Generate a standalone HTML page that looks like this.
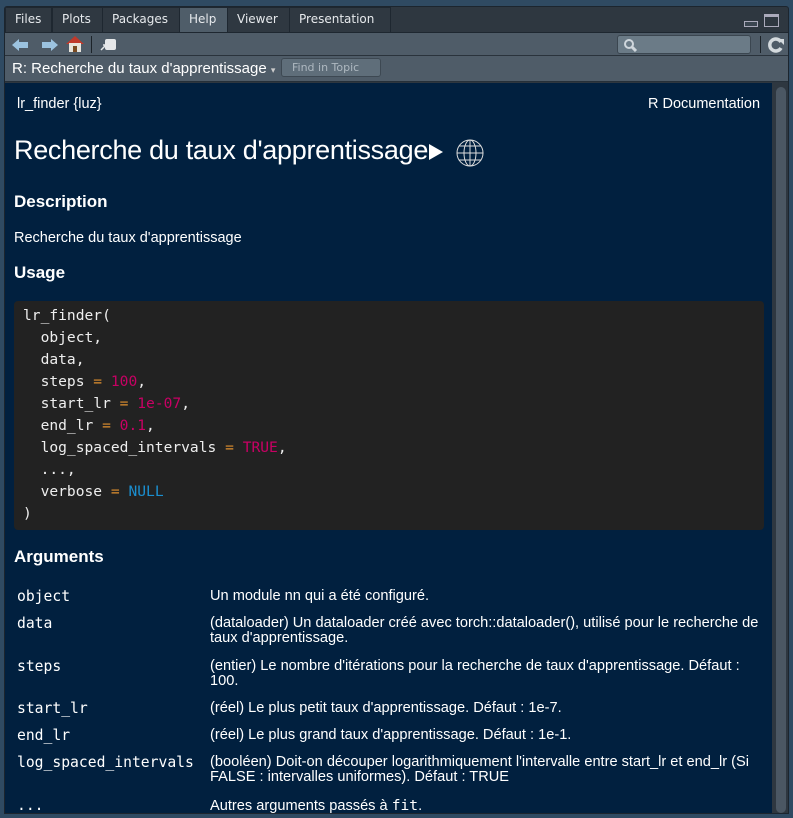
<!DOCTYPE html>
<html><head><meta charset="utf-8"><style>
*{box-sizing:border-box;margin:0;padding:0}
body{width:793px;height:818px;background:#2f4a62;font-family:"Liberation Sans",sans-serif;position:relative;overflow:hidden}
#panel{position:absolute;left:4px;top:6px;width:785px;height:808px;background:#2e3740;border:1px solid #1c252e;border-radius:3px 3px 0 0;overflow:hidden}
.tabs{position:absolute;left:0;top:0;height:25px;width:100%}
.tab{position:absolute;top:0;height:25px;border:1px solid #1e2730;border-bottom:none;background:#2f3841;color:#e6e9ec;font-family:"DejaVu Sans",sans-serif;font-size:12px;line-height:23px;padding-left:9px}
.tab.sel{background:#4f5d69}
#tb{position:absolute;left:0;top:25px;height:24px;width:100%;background:#4f5c68;border-top:1px solid #1e2730;border-bottom:1px solid #2a333c}
#tt{position:absolute;left:0;top:49px;height:26px;width:100%;background:#4f5c68;border-bottom:1px solid #263039}
#content{position:absolute;left:0;top:76px;width:767px;height:732px;background:#01203f;color:#fff}
#sb{position:absolute;left:767px;top:76px;width:18px;height:732px;background:#2e3740}
#sb div{position:absolute;left:4px;top:4px;width:10px;height:726px;border-radius:5px;background:#4b5763}
.abs{position:absolute;white-space:nowrap}
.mono{font-family:"DejaVu Sans Mono",monospace}
h2{position:absolute;font-size:17px;font-weight:bold;left:9px}
.code{position:absolute;left:9px;top:218px;width:750px;height:229px;background:#222;border-radius:4px}
.code pre{position:absolute;left:9px;top:4px;font-family:"DejaVu Sans Mono",monospace;font-size:14.6px;line-height:22px;color:#eee}
.o{color:#e0902f}.n{color:#c80064}.b{color:#1b8fd0}
.arg{position:absolute;left:12px;font-family:"DejaVu Sans Mono",monospace;font-size:14.7px;color:#fff}
.d{position:absolute;left:205px;font-size:14.6px;line-height:15px;color:#fff;white-space:nowrap}
</style></head><body>
<div id="panel">
 <div class="tabs">
  <div class="tab" style="left:0;width:47px">Files</div>
  <div class="tab" style="left:47px;width:51px">Plots</div>
  <div class="tab" style="left:97px;width:78px">Packages</div>
  <div class="tab sel" style="left:174px;width:49px">Help</div>
  <div class="tab" style="left:222px;width:63px">Viewer</div>
  <div class="tab" style="left:284px;width:102px">Presentation</div>
  <div class="abs" style="left:739px;top:14px;width:14px;height:6px;border:1px solid #aab;background:#3a4550"></div>
  <div class="abs" style="left:759px;top:7px;width:15px;height:13px;border:1px solid #aab;border-top-width:3px"></div>
 </div>
 <div id="tb">
  <svg class="abs" style="left:6px;top:4px" width="20" height="16"><path d="M1 8 L8 2 V5 H17 V11 H8 V14 Z" fill="#9cc3e0"/></svg>
  <svg class="abs" style="left:34px;top:4px" width="20" height="16"><path d="M19 8 L12 2 V5 H3 V11 H12 V14 Z" fill="#9cc3e0"/></svg>
  <svg class="abs" style="left:60px;top:2px" width="20" height="18"><path d="M1 9 L10 1 L19 9 Z" fill="#c0392b"/><rect x="4" y="8" width="12" height="9" fill="#e8e4dc"/><rect x="8" y="11" width="4" height="6" fill="#7a4b22"/></svg>
  <div class="abs" style="left:86px;top:3px;width:1px;height:17px;background:#1c2329"></div>
  <svg class="abs" style="left:95px;top:5px" width="18" height="14"><rect x="5" y="1" width="11" height="11" rx="2" fill="#e6e8ea"/><path d="M1 12 L6 7 M3 7 H6 V10" stroke="#e6e8ea" stroke-width="1.5" fill="none"/></svg>
  <div class="abs" style="left:612px;top:2px;width:134px;height:19px;background:#6b7b87;border:1px solid #3b4650;border-radius:3px"></div>
  <svg class="abs" style="left:618px;top:5px" width="16" height="14"><circle cx="6" cy="6" r="4" stroke="#cfd6dc" stroke-width="2" fill="none"/><path d="M9 9 L13 13" stroke="#cfd6dc" stroke-width="3"/></svg>
  <div class="abs" style="left:755px;top:3px;width:1px;height:17px;background:#1c2329"></div>
  <svg class="abs" style="left:762px;top:3px" width="18" height="18"><path d="M14 6 A6 6 0 1 0 14 12" stroke="#d4dade" stroke-width="3.5" fill="none"/><path d="M11 3 H17 V9 Z" fill="#d4dade"/></svg>
 </div>
 <div id="tt">
  <div class="abs" style="left:7px;top:4px;font-size:15px;color:#fff">R: Recherche du taux d'apprentissage <span style="font-size:9px;color:#ccc">▾</span></div>
  <div class="abs" style="left:276px;top:2px;width:100px;height:19px;background:#5f6e7a;border:1px solid #3d4852;border-radius:3px;font-family:'DejaVu Sans',sans-serif;font-size:11px;color:#aeb8c0;line-height:17px;padding-left:10px">Find in Topic</div>
 </div>
 <div id="content">
  <div class="abs" style="left:12px;top:13px;font-size:14.5px">lr_finder {luz}</div>
  <div class="abs" style="left:643px;top:13px;font-size:14.5px">R Documentation</div>
  <div class="abs" style="left:9px;top:52px;font-size:27px;letter-spacing:-0.3px">Recherche du taux d'apprentissage</div>
  <svg class="abs" style="left:423px;top:60px" width="16" height="18"><path d="M1 1 L15 9 L1 17 Z" fill="#fff"/></svg>
  <svg class="abs" style="left:451px;top:56px" width="28" height="28" fill="none" stroke="#ddd" stroke-width="1"><circle cx="14" cy="14" r="13"/><ellipse cx="14" cy="14" rx="6" ry="13"/><path d="M14 1 V27 M1 14 H27 M3 7 H25 M3 21 H25"/></svg>
  <h2 style="top:109px">Description</h2>
  <div class="abs" style="left:9px;top:147px;font-size:14.5px">Recherche du taux d'apprentissage</div>
  <h2 style="top:180px">Usage</h2>
  <div class="code"><pre>lr_finder(
  object,
  data,
  steps <span class="o">=</span> <span class="n">100</span>,
  start_lr <span class="o">=</span> <span class="n">1e-07</span>,
  end_lr <span class="o">=</span> <span class="n">0.1</span>,
  log_spaced_intervals <span class="o">=</span> <span class="n">TRUE</span>,
  ...,
  verbose <span class="o">=</span> <span class="b">NULL</span>
)</pre></div>
  <h2 style="top:464px">Arguments</h2>
  <div class="arg" style="top:505px">object</div><div class="d" style="top:506px">Un module nn qui a été configuré.</div>
  <div class="arg" style="top:532px">data</div><div class="d" style="top:533px">(dataloader) Un dataloader créé avec torch::dataloader(), utilisé pour le recherche de<br>taux d'apprentissage.</div>
  <div class="arg" style="top:575px">steps</div><div class="d" style="top:576px">(entier) Le nombre d'itérations pour la recherche de taux d'apprentissage. Défaut :<br>100.</div>
  <div class="arg" style="top:617px">start_lr</div><div class="d" style="top:618px">(réel) Le plus petit taux d'apprentissage. Défaut : 1e-7.</div>
  <div class="arg" style="top:644px">end_lr</div><div class="d" style="top:645px">(réel) Le plus grand taux d'apprentissage. Défaut : 1e-1.</div>
  <div class="arg" style="top:671px">log_spaced_intervals</div><div class="d" style="top:672px">(booléen) Doit-on découper logarithmiquement l'intervalle entre start_lr et end_lr (Si<br>FALSE : intervalles uniformes). Défaut : TRUE</div>
  <div class="arg" style="top:714px">...</div><div class="d" style="top:715px">Autres arguments passés à <span class="mono">fit</span>.</div>
 </div>
 <div id="sb"><div></div></div>
</div>
</body></html>
